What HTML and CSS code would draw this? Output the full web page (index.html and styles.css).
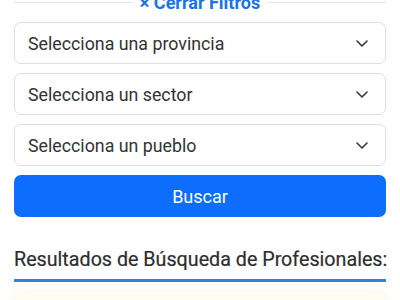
FILE: index.html
```html
<!DOCTYPE html>
<html lang="es">
<head>
<meta charset="utf-8">
<link rel="stylesheet" href="styles.css">
</head>
<body>
<div class="page">
  <div class="filters">
    <div class="filters-head"><span class="close-link">× Cerrar Filtros</span></div>
    <div class="select"><span>Selecciona una provincia</span><svg class="chev" viewBox="0 0 12 7" width="12" height="7"><path d="M1 1l5 5 5-5" fill="none" stroke="#343a40" stroke-width="1.6" stroke-linecap="round" stroke-linejoin="round"/></svg></div>
    <div class="select"><span>Selecciona un sector</span><svg class="chev" viewBox="0 0 12 7" width="12" height="7"><path d="M1 1l5 5 5-5" fill="none" stroke="#343a40" stroke-width="1.6" stroke-linecap="round" stroke-linejoin="round"/></svg></div>
    <div class="select"><span>Selecciona un pueblo</span><svg class="chev" viewBox="0 0 12 7" width="12" height="7"><path d="M1 1l5 5 5-5" fill="none" stroke="#343a40" stroke-width="1.6" stroke-linecap="round" stroke-linejoin="round"/></svg></div>
    <button class="btn">Buscar</button>
  </div>
  <h2 class="results-title">Resultados de Búsqueda de Profesionales:</h2>
  <div class="result-card"></div>
</div>
</body>
</html>
```
FILE: styles.css
```css
html, body {
  margin: 0;
  padding: 0;
  background: #fff;
  font-family: Roboto, "Liberation Sans", sans-serif;
  overflow: hidden;
}
.page {
  padding: 0 14px;
}
.filters {
  display: flex;
  flex-direction: column;
  gap: 9px;
  margin-top: -8px;
}
.filters-head {
  display: flex;
  align-items: center;
  height: 21px;
  gap: 7px;
}
.filters-head::before,
.filters-head::after {
  content: "";
  flex: 1;
  height: 1px;
  background: #e6e6e6;
}
.close-link {
  color: #1a73e8;
  font-weight: 700;
  font-size: 18px;
  line-height: 21px;
}
.select {
  box-sizing: border-box;
  height: 42px;
  border: 1px solid #dedede;
  border-radius: 7px;
  display: flex;
  align-items: center;
  justify-content: space-between;
  padding: 0 17px 0 13px;
  color: #333;
  font-size: 17.8px;
}
.chev {
  display: block;
}
.btn {
  height: 42px;
  border: none;
  border-radius: 7px;
  background: #0d6efd;
  color: #fff;
  font-family: inherit;
  font-size: 18px;
  padding: 0;
}
.results-title {
  margin: 31px 0 0;
  font-size: 19.7px;
  font-weight: 400;
  color: #2e2e2e;
  line-height: 24px;
  padding-bottom: 7px;
  border-bottom: 3px solid #2d83d8;
  white-space: nowrap;
  -webkit-text-stroke: 0.2px #2e2e2e;
}
.result-card {
  margin-top: 11px;
  height: 60px;
  background: #fffcf2;
  border-radius: 8px;
  box-shadow: 0 0 8px rgba(240, 220, 170, 0.35);
}
```
